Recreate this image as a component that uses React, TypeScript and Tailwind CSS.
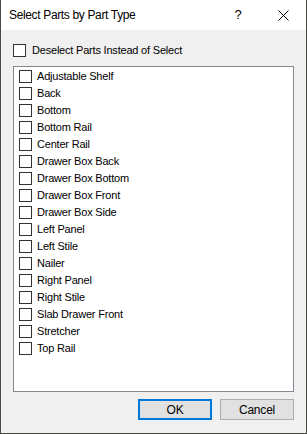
const partes = [
  "Adjustable Shelf",
  "Back",
  "Bottom",
  "Bottom Rail",
  "Center Rail",
  "Drawer Box Back",
  "Drawer Box Bottom",
  "Drawer Box Front",
  "Drawer Box Side",
  "Left Panel",
  "Left Stile",
  "Nailer",
  "Right Panel",
  "Right Stile",
  "Slab Drawer Front",
  "Stretcher",
  "Top Rail",
];

const Casilla = () => (
  <span className="w-[13px] h-[13px] shrink-0 border border-[#333333] bg-white" />
);

export default function App() {
  return (
    <div
      className="w-[307px] h-[434px] flex flex-col bg-[#f0f0f0] border-l border-r border-b border-[#4a4842] text-black"
      style={{ fontFamily: '"Liberation Sans", Arial, sans-serif' }}
    >
      {/* barra de titulo */}
      <div className="h-[30px] bg-white flex items-center shrink-0">
        <span className="pl-[8px] text-[12px] tracking-[-0.35px] flex-1">
          Select Parts by Part Type
        </span>
        <div className="w-[46px] h-[30px] flex items-center justify-center text-[13px]">
          ?
        </div>
        <div className="w-[45px] h-[30px] flex items-center justify-center">
          <svg width="11" height="11" viewBox="0 0 11 11">
            <path d="M0.5 0.5 L10.5 10.5 M10.5 0.5 L0.5 10.5" stroke="#000" strokeWidth="1" />
          </svg>
        </div>
      </div>

      {/* cuerpo */}
      <div className="flex-1 flex flex-col px-[12px] pt-[14px]">
        <label className="h-[13px] flex items-center gap-[6px] text-[11px] tracking-[-0.2px]">
          <Casilla />
          <span>Deselect Parts Instead of Select</span>
        </label>

        <div className="mt-[9px] w-[281px] h-[326px] border border-[#828790] bg-white pt-[1px] pl-[5px]">
          {partes.map((p) => (
            <div key={p} className="h-[17px] flex items-center gap-[5px] text-[11px] tracking-[-0.2px]">
              <Casilla />
              <span>{p}</span>
            </div>
          ))}
        </div>

        <div className="mt-[7px] flex justify-end gap-[8px]">
          <button className="w-[74px] h-[21px] bg-[#e1e1e1] border-2 border-[#0078d7] text-[12px] tracking-[-0.2px] flex items-center justify-center">
            OK
          </button>
          <button className="w-[74px] h-[21px] bg-[#e1e1e1] border border-[#adadad] text-[12px] tracking-[-0.2px] flex items-center justify-center">
            Cancel
          </button>
        </div>
      </div>
    </div>
  );
}
